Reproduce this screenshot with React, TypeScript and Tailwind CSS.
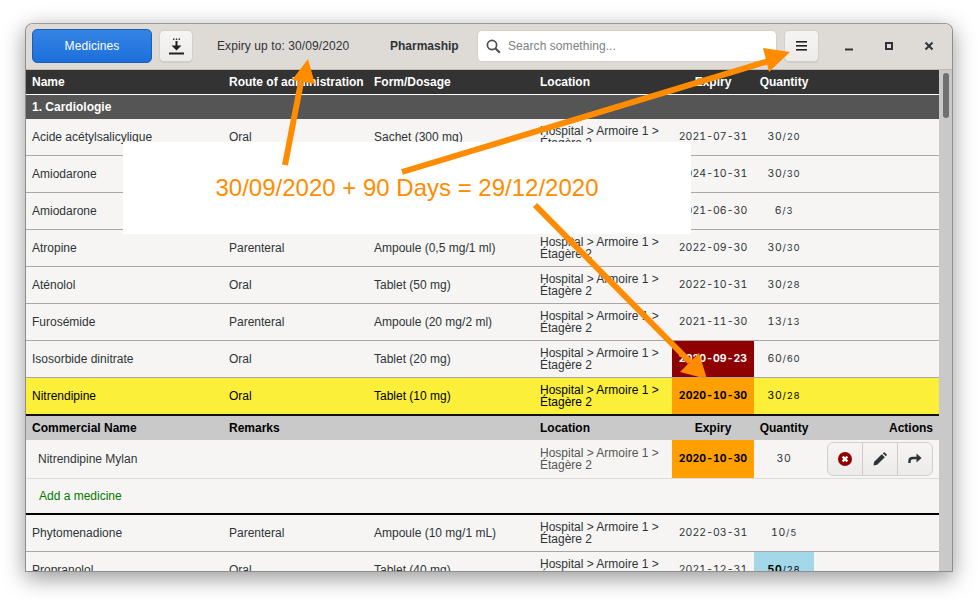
import React from "react";

const sans = "font-['Liberation_Sans',Arial,sans-serif]";
const mono = "font-['Inter','Liberation_Sans',sans-serif]";
const gridCols = "grid grid-cols-[197px_145px_166px_132px_6px_82px_60px_1fr]";
const dateCell = `${mono} text-[10.5px] tracking-[0.05px] [font-variant-numeric:tabular-nums] flex items-center justify-center`;
const qtyCell = `${mono} text-[10.5px] tracking-[0.7px] [font-variant-numeric:tabular-nums] flex items-center justify-center`;

type Row = {
  n: string; r: string; f: string; e: string; q: string; t: string;
  ec?: string; qc?: string; hl?: boolean;
};

const rows: Row[] = [
  { n: "Acide acétylsalicylique", r: "Oral", f: "Sachet (300 mg)", e: "2021-07-31", q: "30", t: "/20" },
  { n: "Amiodarone", r: "Oral", f: "Tablet (200 mg)", e: "2024-10-31", q: "30", t: "/30" },
  { n: "Amiodarone", r: "Parenteral", f: "Ampoule (150 mg/3 ml)", e: "2021-06-30", q: "6", t: "/3" },
  { n: "Atropine", r: "Parenteral", f: "Ampoule (0,5 mg/1 ml)", e: "2022-09-30", q: "30", t: "/30" },
  { n: "Aténolol", r: "Oral", f: "Tablet (50 mg)", e: "2022-10-31", q: "30", t: "/28" },
  { n: "Furosémide", r: "Parenteral", f: "Ampoule (20 mg/2 ml)", e: "2021-11-30", q: "13", t: "/13" },
  { n: "Isosorbide dinitrate", r: "Oral", f: "Tablet (20 mg)", e: "2020-09-23", q: "60", t: "/60", ec: "bg-[#8f0000] text-white font-bold" },
];

function DataRow({ row }: { row: Row }) {
  return (
    <div
      className={`${gridCols} items-stretch ${
        row.hl ? "h-[36px] bg-[#fbef3a] text-black" : "h-[37px] border-b border-b-[#a8a8a8] text-[#2e3436]"
      }`}
    >
      <div className="pl-[6px] flex items-center">{row.n}</div>
      <div className="pl-[6px] flex items-center">{row.r}</div>
      <div className="pl-[6px] flex items-center">{row.f}</div>
      <div className="col-span-2 pl-[6px] flex items-center leading-[12px]">
        <span className="w-[128px]">Hospital &gt; Armoire 1 &gt; Étagère 2</span>
      </div>
      <div className={`${dateCell} ${row.ec ?? ""}`}>{row.e}</div>
      <div className={`${qtyCell} ${row.qc ?? ""}`}>
        <span className={row.qc ? "font-bold" : ""}>{row.q}</span>
        <span className="text-[9.5px]">{row.t}</span>
      </div>
      <div />
    </div>
  );
}

function HeaderButton({ children, className }: { children: React.ReactNode; className?: string }) {
  return (
    <div
      className={`h-[32px] rounded-[5px] border border-[#d3cfca] bg-gradient-to-b from-[#f6f5f4] to-[#edebe9] flex items-center justify-center shadow-[0_1px_0_#d0ccc7] ${className ?? ""}`}
    >
      {children}
    </div>
  );
}

export default function App() {
  return (
    <div className={`relative w-[978px] h-[600px] bg-white overflow-hidden pt-[23px] pl-[25px] ${sans} text-[12px]`}>
      <div className="w-[928px] h-[549px] rounded-t-[8px] border border-[#8e8e8e] border-t-[#9a9a9a] overflow-hidden flex flex-col shadow-[0_6px_22px_rgba(0,0,0,0.42)] bg-[#f6f5f4]">
        {/* title bar */}
        <div className="h-[46px] shrink-0 bg-[#dedbd7] border-b border-b-[#bfb8b1] flex items-center pl-[6px] pb-[1px] text-[#2e3436]">
          <div className="w-[120px] h-[34px] rounded-[5px] border border-[#1a5fb4] bg-gradient-to-b from-[#3584e4] to-[#1c6fdc] text-white flex items-center justify-center tracking-[0.1px]">
            Medicines
          </div>
          <HeaderButton className="w-[34px] ml-[7px]">
            <svg width="15" height="17" viewBox="0 0 15 17">
              <g fill="#222">
                <rect x="4" y="0.5" width="1.4" height="1.4" />
                <rect x="6.8" y="0.5" width="1.4" height="1.4" />
                <rect x="9.6" y="0.5" width="1.4" height="1.4" />
                <rect x="6.5" y="3" width="2" height="6" />
                <path d="M2.5 7.5 H12.5 L7.5 12.5 Z" />
                <rect x="0" y="14.5" width="15" height="2" />
              </g>
            </svg>
          </HeaderButton>
          <div className="ml-[24px] w-[173px] whitespace-nowrap tracking-[0.09px]">Expiry up to: 30/09/2020</div>
          <div className="w-[87px] font-bold whitespace-nowrap">Pharmaship</div>
          <div className="w-[300px] h-[32px] rounded-[5px] bg-white border border-[#d3cfca] flex items-center pl-[8px] text-[#7b7f80]">
            <svg width="15" height="15" viewBox="0 0 15 15" fill="none" stroke="#4a4d4e" strokeWidth="1.7">
              <circle cx="6" cy="6" r="4.6" />
              <path d="M9.5 9.5 L13.8 13.8" strokeWidth="2" />
            </svg>
            <span className="ml-[7px] tracking-[0.06px]">Search something...</span>
          </div>
          <HeaderButton className="w-[35px] ml-[7px]">
            <svg width="11" height="10" viewBox="0 0 11 10" fill="#222">
              <rect y="0" width="11" height="1.6" />
              <rect y="4" width="11" height="1.6" />
              <rect y="8" width="11" height="1.6" />
            </svg>
          </HeaderButton>
          <div className="flex-1 flex items-center justify-around pl-[10px] pr-[3px]">
            <svg width="10" height="10" viewBox="0 0 10 10" fill="#2e3436">
              <rect x="1" y="7.5" width="8" height="2" />
            </svg>
            <svg width="10" height="10" viewBox="0 0 10 10" fill="none" stroke="#2e3436" strokeWidth="2">
              <rect x="2" y="2" width="6" height="6" />
            </svg>
            <svg width="10" height="10" viewBox="0 0 10 10" fill="none" stroke="#2e3436" strokeWidth="2">
              <path d="M1.5 1.5 L8.5 8.5 M8.5 1.5 L1.5 8.5" />
            </svg>
          </div>
        </div>

        <div className="flex flex-1 min-h-0">
          {/* table */}
          <div className="w-[913px] shrink-0 overflow-hidden bg-[#f6f5f4]">
            <div className={`${gridCols} h-[25px] bg-[#333333] text-white font-bold items-center border-b border-b-white`}>
              <div className="pl-[6px]">Name</div>
              <div className="pl-[6px] whitespace-nowrap">Route of administration</div>
              <div className="pl-[6px]">Form/Dosage</div>
              <div className="col-span-2 pl-[6px]">Location</div>
              <div className="text-center">Expiry</div>
              <div className="text-center">Quantity</div>
              <div />
            </div>
            <div className="h-[24px] bg-[#555555] text-white font-bold flex items-center pl-[6px]">1. Cardiologie</div>

            {rows.map((r, i) => (
              <DataRow key={i} row={r} />
            ))}
            <DataRow row={{ n: "Nitrendipine", r: "Oral", f: "Tablet (10 mg)", e: "2020-10-30", q: "30", t: "/28", ec: "bg-[#ff9f00] text-black font-bold", hl: true }} />

            {/* detail header */}
            <div className={`${gridCols} h-[26px] bg-[#c9c9c9] text-black font-bold items-center border-t-2 border-t-[#111]`}>
              <div className="pl-[6px]">Commercial Name</div>
              <div className="pl-[6px]">Remarks</div>
              <div />
              <div className="col-span-2 pl-[6px]">Location</div>
              <div className="text-center">Expiry</div>
              <div className="text-center">Quantity</div>
              <div className="text-right pr-[6px]">Actions</div>
            </div>
            <div className={`${gridCols} h-[39px] items-stretch border-b border-b-[#dcdcdc] text-[#2e3436]`}>
              <div className="pl-[12px] flex items-center">Nitrendipine Mylan</div>
              <div />
              <div />
              <div className="col-span-2 pl-[6px] flex items-center leading-[12px] text-[#555]">
                <span className="w-[128px]">Hospital &gt; Armoire 1 &gt; Étagère 2</span>
              </div>
              <div className={`${dateCell} font-bold bg-[#ff9f00] text-black`}>2020-10-30</div>
              <div className={qtyCell}>30</div>
              <div className="flex items-center justify-end pr-[6px]">
                <div className="flex h-[34px] w-[106px] rounded-[6px] border border-[#d3cfca] bg-gradient-to-b from-[#f6f5f4] to-[#edebe9] divide-x divide-[#cfcbc6]">
                  <div className="flex-1 flex items-center justify-center">
                    <svg width="14" height="14" viewBox="0 0 14 14">
                      <circle cx="7" cy="7" r="7" fill="#8f0000" />
                      <path d="M4.6 4.6 L9.4 9.4 M9.4 4.6 L4.6 9.4" stroke="#fff" strokeWidth="2.2" />
                    </svg>
                  </div>
                  <div className="flex-1 flex items-center justify-center">
                    <svg width="14" height="14" viewBox="0 0 14 14" fill="#2e3436">
                      <path d="M0.5 13.5 L1.2 9.8 L8.8 2.2 L11.8 5.2 L4.2 12.8 Z" />
                      <path d="M9.8 1.2 L10.7 0.4 Q11.2 0 11.7 0.4 L13.6 2.3 Q14 2.8 13.6 3.3 L12.8 4.2 Z" />
                    </svg>
                  </div>
                  <div className="flex-1 flex items-center justify-center">
                    <svg width="14" height="12" viewBox="0 0 14 12" fill="none">
                      <path d="M1.5 10 V8 Q1.5 5 5 5 H10" stroke="#2e3436" strokeWidth="2.4" />
                      <path d="M8.5 0.6 L13.6 5 L8.5 9.4 Z" fill="#2e3436" />
                    </svg>
                  </div>
                </div>
              </div>
            </div>
            <div className="h-[34px] flex items-center pl-[13px] text-[#007a00]">Add a medicine</div>
            <div className={`${gridCols} h-[39px] items-stretch border-t-2 border-t-black border-b border-b-[#a8a8a8] text-[#2e3436]`}>
              <div className="pl-[6px] flex items-center">Phytomenadione</div>
              <div className="pl-[6px] flex items-center">Parenteral</div>
              <div className="pl-[6px] flex items-center">Ampoule (10 mg/1 mL)</div>
              <div className="col-span-2 pl-[6px] flex items-center leading-[12px]">
                <span className="w-[128px]">Hospital &gt; Armoire 1 &gt; Étagère 2</span>
              </div>
              <div className={dateCell}>2022-03-31</div>
              <div className={qtyCell}>
                10<span className="text-[9.5px]">/5</span>
              </div>
              <div />
            </div>
            <DataRow
              row={{ n: "Propranolol", r: "Oral", f: "Tablet (40 mg)", e: "2021-12-31", q: "50", t: "/28", qc: "bg-[#a3d8e8] text-black" }}
            />
          </div>
          {/* scrollbar */}
          <div className="flex-1 bg-[#c9c9c9] pt-[3px] flex justify-center">
            <div className="w-[6px] h-[45px] rounded-full bg-[#707070]" />
          </div>
        </div>
      </div>

      {/* annotation */}
      <div className="absolute left-[123px] top-[142px] w-[568px] h-[92px] bg-white flex items-center justify-center">
        <span className="text-[24px] text-[#ff8c00]">30/09/2020 + 90 Days = 29/12/2020</span>
      </div>
      <svg className="absolute inset-0 pointer-events-none" width="978" height="600" viewBox="0 0 978 600">
        <g fill="#ff8c00" stroke="#ff8c00">
          <path d="M285 165 L301 82" strokeWidth="6" fill="none" />
          <path d="M308 59 L292 80 L315 84 Z" stroke="none" />
          <path d="M402 172 L772 60" strokeWidth="6" fill="none" />
          <path d="M790 52 L763 48 L769 72 Z" stroke="none" />
          <path d="M535 205 L690 362" strokeWidth="6" fill="none" />
          <path d="M707 379 L680 372 L699 353 Z" stroke="none" />
        </g>
      </svg>
    </div>
  );
}
